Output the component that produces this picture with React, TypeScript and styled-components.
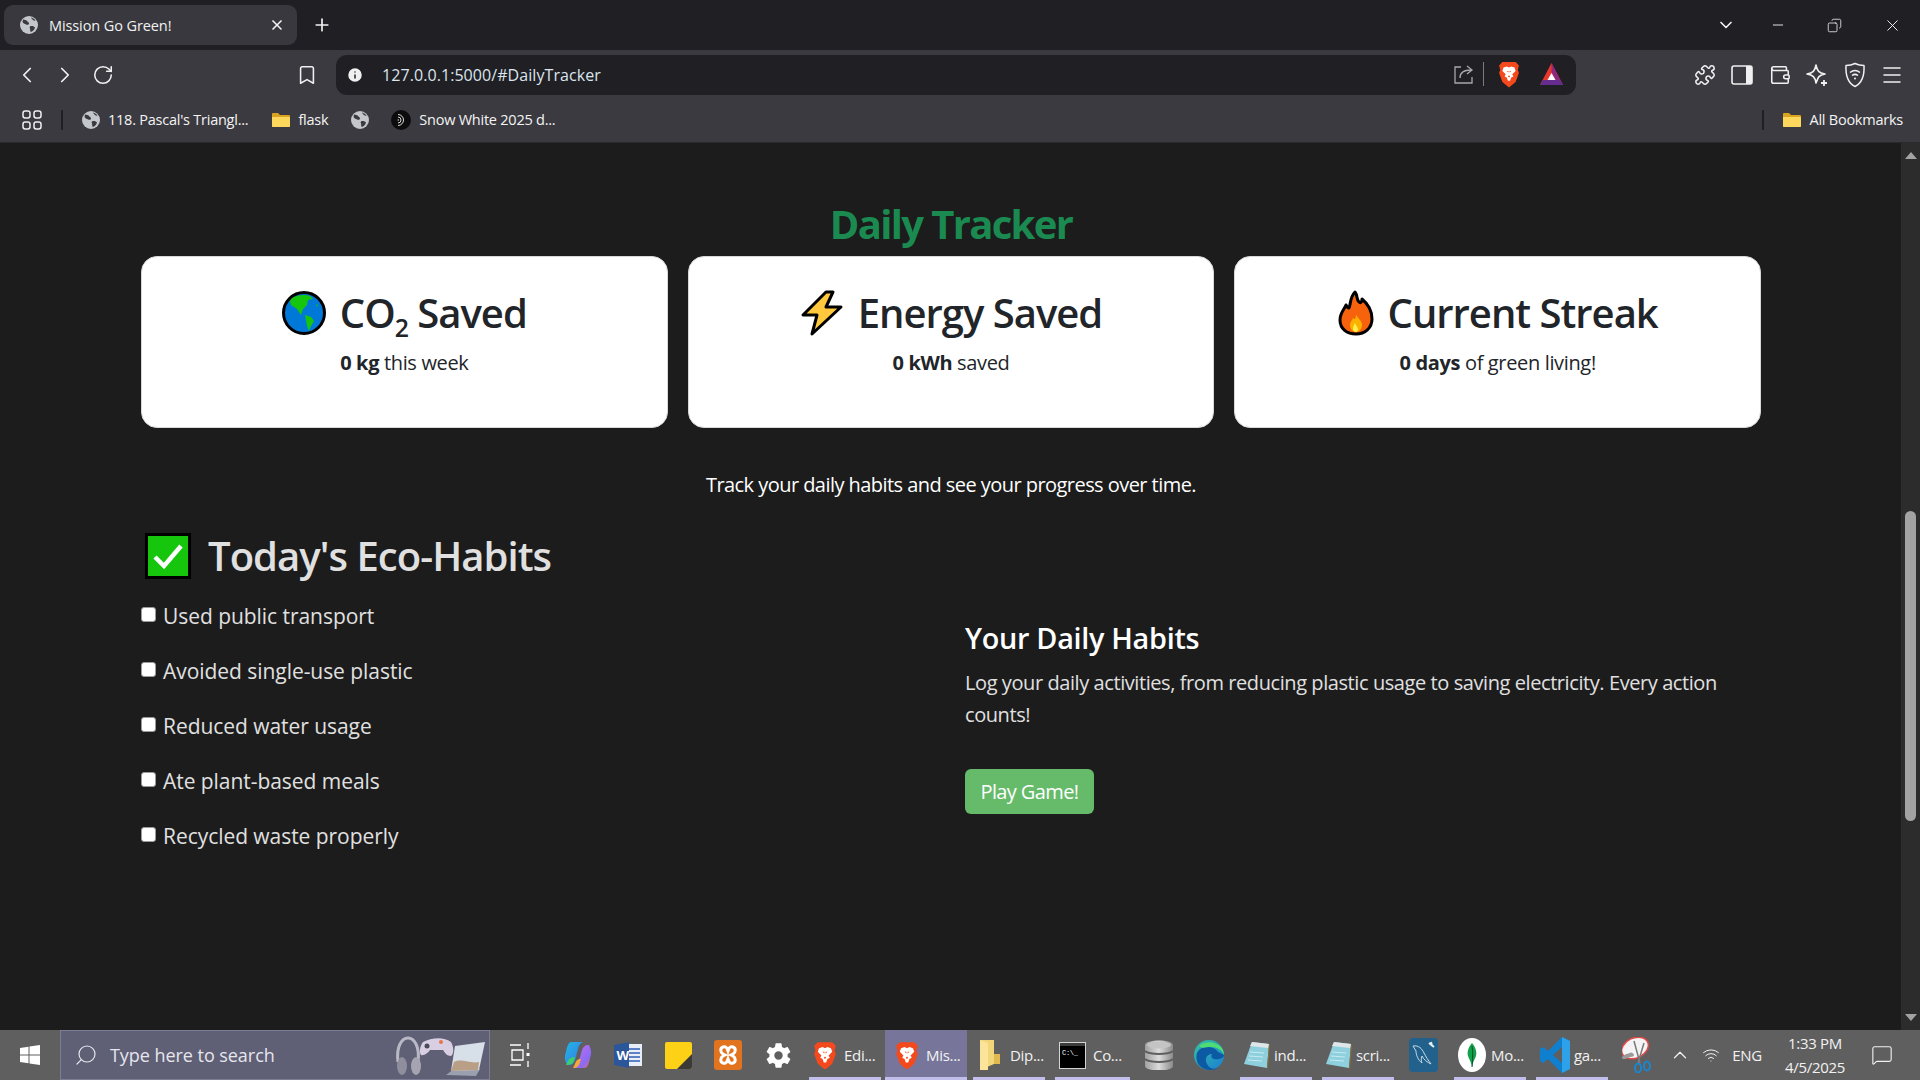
import styled, { createGlobalStyle } from 'styled-components';
import {
  Bookmark,
  ChevronDown,
  ChevronLeft,
  ChevronRight,
  ChevronUp,
  Copy,
  Menu,
  MessageSquare,
  Minus,
  Plus,
  Puzzle,
  RotateCw,
  Search,
  Wallet,
  Wifi,
  X,
  Info,
} from 'lucide-react';
import { IoSettingsSharp } from 'react-icons/io5';

const FONT = '"Open Sans", "Noto Sans", "Liberation Sans", sans-serif';

const GlobalStyle = createGlobalStyle`
  html, body {
    margin: 0;
    padding: 0;
    height: 100%;
    overflow: hidden;
    background: #1c1c1c;
    font-family: ${FONT};
  }
  * { box-sizing: border-box; }
`;

const Screen = styled.div`
  display: flex;
  flex-direction: column;
  width: 1920px;
  height: 1080px;
  overflow: hidden;
`;

/* browser chrome */

const TabStrip = styled.div`
  display: flex;
  align-items: center;
  height: 50px;
  padding: 0 0 0 4px;
  background: #1f1f24;
  color: #f2f2f2;
`;

const Tab = styled.div`
  display: flex;
  align-items: center;
  width: 293px;
  height: 40px;
  padding: 0 12px 0 16px;
  border-radius: 9px;
  background: #38383e;
  font-size: 14.5px;
  letter-spacing: -0.1px;
`;

const TabTitle = styled.span`
  flex: 1;
  margin-left: 11px;
`;

const NewTab = styled.div`
  display: flex;
  margin-left: 15px;
`;

const WindowControls = styled.div`
  display: flex;
  align-items: center;
  margin-left: auto;
`;

const WindowButton = styled.div<{ $width: number }>`
  display: flex;
  justify-content: center;
  width: ${(p) => p.$width}px;
`;

const Toolbar = styled.div`
  display: flex;
  align-items: center;
  height: 52px;
  padding: 2px 0 5px 8px;
  background: #3b3a40;
  color: #f0f0f0;
`;

const ToolButton = styled.div<{ $gap?: number; $width?: number }>`
  display: flex;
  justify-content: center;
  width: ${(p) => p.$width ?? 38}px;
  margin-left: ${(p) => p.$gap ?? 0}px;
`;

const UrlBar = styled.div`
  display: flex;
  align-items: center;
  width: 1240px;
  height: 40px;
  margin-left: 10px;
  padding: 0 3px 0 10px;
  border-radius: 11px;
  background: #1f1f24;
`;

const UrlText = styled.span`
  margin-left: 18px;
  font-size: 16px;
  letter-spacing: 0.07px;
  color: #dce4ec;
`;

const UrlActions = styled.div`
  display: flex;
  align-items: center;
  margin-left: auto;
`;

const UrlDivider = styled.div`
  width: 1px;
  height: 24px;
  margin: 0 14px 0 9px;
  background: #7c7c80;
`;

const BatSlot = styled.div`
  display: flex;
  justify-content: center;
  width: 44px;
  margin-left: 9px;
`;

const BookmarksBar = styled.div`
  display: flex;
  align-items: center;
  height: 41px;
  padding: 0 17px 5px 22px;
  border-bottom: 1px solid #2a2a2e;
  background: #3b3a40;
  color: #f4f4f4;
  font-size: 14.5px;
  letter-spacing: -0.24px;
`;

const BarDivider = styled.div<{ $left?: string }>`
  width: 2px;
  height: 20px;
  margin: 0 19px 0 ${(p) => p.$left ?? '19px'};
  background: #1f1f24;
`;

const BookmarkItem = styled.div<{ $left?: number }>`
  display: flex;
  align-items: center;
  gap: 8px;
  margin-left: ${(p) => p.$left ?? 0}px;
  white-space: nowrap;
`;

/* page */

const Viewport = styled.div`
  display: flex;
  flex: 1;
  min-height: 0;
`;

const Page = styled.main`
  flex: 1;
  padding: 57px 140px 0 141px;
  background: #1c1c1c;
`;

const Title = styled.h1`
  margin: 0 0 8px;
  height: 48px;
  font-size: 40px;
  line-height: 48px;
  font-weight: 700;
  letter-spacing: -1.65px;
  text-align: center;
  color: #1b8a50;
`;

const Cards = styled.section`
  display: grid;
  grid-template-columns: repeat(3, 1fr);
  gap: 20px;
`;

const Card = styled.article`
  height: 172px;
  padding: 32px 16px 0;
  border-radius: 16px;
  background: #fff;
  border: 1px solid #d8d8d8;
  color: #212529;
  text-align: center;
`;

const CardHeading = styled.h2`
  display: flex;
  align-items: center;
  justify-content: center;
  gap: 14px;
  margin: 0 0 10px;
  height: 48px;
  font-size: 40px;
  font-weight: 600;
  letter-spacing: -1px;
  line-height: 48px;
`;

const Subscript = styled.sub`
  font-size: 0.62em;
  line-height: 0;
`;

const CardText = styled.p`
  margin: 0;
  font-size: 20px;
  line-height: 32px;
  letter-spacing: -0.35px;
  font-weight: 400;
  color: #212529;

  strong {
    font-weight: 700;
  }
`;

const Lead = styled.p`
  margin: 41px 0 0;
  font-size: 20px;
  line-height: 32px;
  letter-spacing: -0.55px;
  text-align: center;
  color: #fff;
`;

const Columns = styled.section`
  display: grid;
  grid-template-columns: 796px 796px;
  column-gap: 28px;
  margin-top: 31px;
`;

const HabitsHeading = styled.h2`
  display: flex;
  align-items: center;
  gap: 17px;
  margin: 0 0 8px 4px;
  height: 48px;
  font-size: 40px;
  line-height: 48px;
  font-weight: 600;
  letter-spacing: -0.95px;
  color: #e0e0e0;
`;

const HabitList = styled.ul`
  margin: 0;
  padding: 0;
  list-style: none;
`;

const HabitRow = styled.li`
  display: flex;
  align-items: center;
  height: 55px;
  font-size: 21px;
  letter-spacing: -0.05px;
  color: #e0e0e0;
`;

const HabitBox = styled.input`
  width: 15px;
  height: 15px;
  margin: 0 7px 3px 0;
  appearance: none;
  border-radius: 3px;
  border: 1px solid #9a9a9a;
  background: #fff;
`;

const InfoColumn = styled.div`
  padding-top: 87px;
`;

const InfoHeading = styled.h3`
  margin: 0 0 10px;
  font-size: 28.8px;
  line-height: 38px;
  font-weight: 600;
  letter-spacing: -0.3px;
  color: #fff;
`;

const InfoText = styled.p`
  margin: 0 0 38px;
  font-size: 20px;
  line-height: 32px;
  letter-spacing: -0.42px;
  color: #e0e0e0;
`;

const PlayButton = styled.button`
  width: 129px;
  height: 45px;
  padding: 0;
  border: none;
  border-radius: 6px;
  background: #66bb6a;
  color: #fff;
  font-family: ${FONT};
  font-size: 20px;
  letter-spacing: -0.6px;
`;

const ScrollTrack = styled.div`
  display: flex;
  flex-direction: column;
  align-items: center;
  width: 19px;
  background: #2c2c2c;
`;

const ScrollArrow = styled.div<{ $down?: boolean }>`
  width: 0;
  height: 0;
  margin-top: ${(p) => (p.$down ? 'auto' : '9px')};
  margin-bottom: ${(p) => (p.$down ? '9px' : '0')};
  border-left: 6.5px solid transparent;
  border-right: 6.5px solid transparent;
  ${(p) => (p.$down ? 'border-top: 7px solid #a3a3a3;' : 'border-bottom: 7px solid #a3a3a3;')}
`;

const ScrollThumb = styled.div`
  width: 11px;
  height: 310px;
  margin-top: 352px;
  border-radius: 6px;
  background: #a3a3a3;
`;

/* taskbar */

const Taskbar = styled.footer`
  display: flex;
  align-items: stretch;
  height: 50px;
  background: #5f5f5f;
  color: #f2f2f2;
  font-size: 15px;
  letter-spacing: -0.3px;
`;

const StartButton = styled.div`
  display: flex;
  align-items: center;
  justify-content: center;
  width: 60px;
`;

const SearchBox = styled.div`
  display: flex;
  align-items: center;
  width: 430px;
  padding: 0 3px 0 13px;
  border: 1px solid #7d7d95;
  background: #5f5f75;
  color: #e6e6ee;
  font-size: 18px;
  letter-spacing: -0.05px;
`;

const SearchLabel = styled.span`
  margin-left: 12px;
`;

const SearchArt = styled.svg`
  margin-left: auto;
`;

const IconSlot = styled.div<{ $width?: number }>`
  display: flex;
  align-items: center;
  justify-content: center;
  width: ${(p) => p.$width ?? 50}px;
`;

const TaskViewSlot = styled(IconSlot)`
  padding-right: 4px;
`;

const TaskButton = styled.div<{ $active?: boolean; $gap?: number; $pad?: number; $width?: number }>`
  position: relative;
  display: flex;
  align-items: center;
  gap: ${(p) => p.$gap ?? 7}px;
  width: ${(p) => p.$width ?? 82}px;
  padding-left: ${(p) => p.$pad ?? 10}px;
  background: ${(p) => (p.$active ? '#77769a' : 'transparent')};

  &::after {
    content: '';
    position: absolute;
    left: ${(p) => (p.$active ? 0 : 6)}px;
    right: ${(p) => (p.$active ? 0 : 4)}px;
    bottom: 0;
    height: 3px;
    background: #c2beec;
  }
`;

const Tray = styled.div`
  display: flex;
  align-items: center;
  margin-left: auto;
  padding-right: 16px;
`;

const TrayLabel = styled.span<{ $width: number }>`
  width: ${(p) => p.$width}px;
  text-align: center;
  font-size: 15px;
`;

const Clock = styled.div`
  width: 90px;
  text-align: center;
  font-size: 15px;
  line-height: 24px;
`;

/* small drawings */

const Favicon = () => (
  <svg width="18" height="18" viewBox="0 0 18 18">
    <circle cx="9" cy="9" r="9" fill="#c3c6ca" />
    <path d="M3 3.500c2 .5 3 .3 4 1.500s2 1 2 2.500-2 1.500-3 1-2.500-1-3.500-2.500zM10 10.500c2-1 4 0 5 1-.5 2-2 4-4 4.500-1.500-1-.5-2.500-1-3.500s-.5-1.500 0-2zM11 1.500c2 .5 3.500 1.500 4.500 3-1 .5-2.500 0-3-1s-1.500-1-1.500-2z" fill="#3b3a40" />
  </svg>
);

const FolderIcon = () => (
  <svg width="18" height="18" viewBox="0 0 18 18">
    <path d="M0 3a1 1 0 0 1 1-1h5l2 2h9a1 1 0 0 1 1 1v10a1 1 0 0 1-1 1H1a1 1 0 0 1-1-1z" fill="#d9a520" />
    <path d="M0 6h17a1 1 0 0 1 1 1v8a1 1 0 0 1-1 1H1a1 1 0 0 1-1-1z" fill="#fdd85d" />
  </svg>
);

const BraveIcon = ({ size = 22 }: { size?: number }) => (
  <svg width={size} height={size * 1.2} viewBox="0 0 20 24">
    <path d="M4 1h12l3 3-1 4 1 3-3 8-6 5-6-5-3-8 1-3-1-4z" fill="#f4491c" />
    <path d="M5 6l3-1 2 1 2-1 3 1 1 3-3 3 1 2-2 1-1 3h-2l-1-3-2-1 1-2-3-3z" fill="#fff" />
    <path d="M8 9h1.500v1.500zM12 9h-1.500v1.500zM9 14l1-1 1 1-1 1z" fill="#f4491c" />
  </svg>
);

const BatIcon = () => (
  <svg width="23" height="22" viewBox="0 0 23 22">
    <path d="M11.500 0L23 22H0z" fill="#e8372c" />
    <path d="M11.500 0L23 22h-5L11.500 9z" fill="#8b2a7e" />
    <path d="M0 22l3-5h17l3 5z" fill="#662d91" />
    <path d="M11.500 10l4 7h-8z" fill="#fff" />
  </svg>
);

const ShareIcon = () => (
  <svg width="20" height="20" viewBox="0 0 20 20" fill="none" stroke="#a8a8ac" strokeWidth="1.300">
    <path d="M7 3H1v16h17v-6" />
    <path d="M6 14c0-5 4-8 11-8M13 2l5 4-5 4" />
  </svg>
);

const SidebarIcon = () => (
  <svg width="22" height="22" viewBox="0 0 22 22">
    <rect x="1" y="2" width="20" height="18" rx="2" fill="none" stroke="#f0f0f0" strokeWidth="1.600" />
    <path d="M15 2h4a2 2 0 0 1 2 2v14a2 2 0 0 1-2 2h-4z" fill="#f0f0f0" />
  </svg>
);

const LeoIcon = () => (
  <svg width="22" height="24" viewBox="0 0 22 24" fill="none" stroke="#f0f0f0" strokeWidth="1.600">
    <path d="M10 2c1 6 3 8 9 9-6 1-7 3-9 9-1-6-3-8-9-9 6-1 8-3 9-9z" strokeLinejoin="round" />
    <path d="M18 17v6M15 20h6" strokeWidth="1.800" />
  </svg>
);

const VpnShieldIcon = () => (
  <svg width="22" height="26" viewBox="0 0 22 26" fill="none" stroke="#f0f0f0" strokeWidth="1.500">
    <path d="M11 1.500c3 1.500 6 2 9 2 .5 9-1 17-9 21-8-4-9.500-12-9-21 3 0 6-.5 9-2z" strokeLinejoin="round" />
    <path d="M6 10.500c3-2.500 7-2.500 10 0M8 13.500c2-1.500 4-1.500 6 0" />
    <circle cx="11" cy="16.500" r="1" fill="#f0f0f0" stroke="none" />
  </svg>
);

const EarthEmoji = () => (
  <svg width="44" height="44" viewBox="0 0 44 44">
    <circle cx="22" cy="22" r="20.500" fill="#0078d7" stroke="#000" strokeWidth="3" />
    <path d="M10 7c5-3 13-4 18-2l3 3-5 1-1 5-4 4-2 6-4-6-6-4-1-4z" fill="#16c60c" />
    <path d="M23 24l6 2 3 4-3 5-2 5-2-5-1-6zM34 13l2 1-1 2z" fill="#16c60c" />
  </svg>
);

const BoltEmoji = () => (
  <svg width="44" height="46" viewBox="0 0 44 46">
    <path d="M26 2L3 25h14l-5 19 29-27H26l7-15z" fill="#ffc83d" stroke="#000" strokeWidth="3" strokeLinejoin="round" />
  </svg>
);

const FireEmoji = () => (
  <svg width="36" height="46" viewBox="0 0 36 46">
    <path d="M17 2c3 4 1 7 4 10 2 2 3-1 3-3 6 5 10 12 10 20 0 9-7 15-16 15S2 39 2 30c0-7 4-10 6-15 1 2 2 3 3 3 2-5 1-11 6-16z" fill="#f7630c" stroke="#000" strokeWidth="3" strokeLinejoin="round" />
    <path d="M18 24c1 4 6 6 6 11 0 4-3 7-6 7s-6-3-6-7c0-3 2-4 3-7 1 1 2 1 2 1 1-2 1-3 1-5z" fill="#fcb100" />
    <path d="M17 33c1 3 3 4 3 6 0 2-1 3-2 3s-3-1-3-3c0-3 1-4 2-6z" fill="#fff04d" />
  </svg>
);

const CheckEmoji = () => (
  <svg width="46" height="46" viewBox="0 0 46 46">
    <rect x="1.500" y="1.500" width="43" height="43" fill="#16c60c" stroke="#000" strokeWidth="3" />
    <path d="M10 24l9 9 17-20" fill="none" stroke="#fff" strokeWidth="4.500" />
  </svg>
);

const WindowsLogo = () => (
  <svg width="20" height="20" viewBox="0 0 20 20" fill="#fff">
    <path d="M0 3l8.500-1.200V9.500H0zM9.500 1.600L20 0v9.500H9.500zM0 10.500h8.500v7.700L0 17zM9.500 10.500H20V20L9.500 18.400z" />
  </svg>
);

const TaskViewIcon = () => (
  <svg width="20" height="24" viewBox="0 0 20 24" fill="none" stroke="#fff" strokeWidth="1.300">
    <path d="M0 2h11M0 22h11M2 7h11v10H2zM18 0v6M18 18v6" />
    <rect x="16.500" y="10" width="3" height="3" fill="#fff" stroke="none" />
  </svg>
);

const SearchDecor = () => (
  <SearchArt width="92" height="46" viewBox="0 0 92 46">
    <path d="M4 30C2 14 8 6 14 6s12 8 10 24" fill="none" stroke="#b9b8c6" strokeWidth="3" />
    <ellipse cx="8" cy="34" rx="5" ry="9" fill="#8f8e9c" />
    <ellipse cx="22" cy="34" rx="5" ry="9" fill="#a5a4b0" />
    <path d="M29 10c8-4 20-6 28 0 3 5 3 12 0 14-4 0-6-3-8-6H36c-2 3-6 6-9 5-2-3-1-9 2-13z" fill="#d9cfe2" />
    <circle cx="33" cy="14" r="2.500" fill="#4a4a58" />
    <circle cx="47" cy="10" r="2" fill="#e8724a" />
    <path d="M52 43l8-6h26l-4 7z" fill="#9aa0ae" />
    <path d="M61 14l30-4-6 28-28 1z" fill="#d7dfe8" />
    <path d="M60 30c8-4 16 2 25 0l-1 8-27 1z" fill="#b89f86" />
  </SearchArt>
);

const CopilotIcon = () => (
  <svg width="28" height="28" viewBox="0 0 28 28">
    <defs>
      <linearGradient id="cop1" x1="0" y1="0" x2="1" y2="1">
        <stop offset="0" stopColor="#1fb8e6" />
        <stop offset="0.6" stopColor="#2f8fe6" />
        <stop offset="1" stopColor="#3ccf6a" />
      </linearGradient>
      <linearGradient id="cop2" x1="0" y1="0" x2="1" y2="1">
        <stop offset="0" stopColor="#d06bf0" />
        <stop offset="0.7" stopColor="#8a6bf5" />
        <stop offset="1" stopColor="#f26a5a" />
      </linearGradient>
    </defs>
    <path d="M8 1h11c-3 1-4 3-5 7l-3 11c-1 3-3 5-6 5H3C1 20 0 16 2 11 3 6 4 1 8 1z" fill="url(#cop1)" />
    <path d="M20 27H9c3-1 5-3 6-7l3-11c1-3 3-5 6-5h1c2 4 3 8 1 13-1 5-2 10-6 10z" fill="url(#cop2)" />
    <path d="M9 27c4 0 6-2 7-6l1-3c-4 0-5 2-6 5z" fill="#f7a63a" />
    <path d="M2 24c4 0 7-1 8-5l1-3c-3 0-6 1-7 4z" fill="#3ccf6a" />
  </svg>
);

const WordIcon = () => (
  <svg width="28" height="28" viewBox="0 0 28 28">
    <rect x="10" y="3" width="18" height="22" fill="#e8eef8" />
    <path d="M14 8h12M14 12h12M14 16h12M14 20h12" stroke="#2b5fb3" strokeWidth="1.500" />
    <path d="M0 4l15-3v26L0 24z" fill="#2b579a" />
    <text x="2.500" y="19" fontSize="13" fontWeight="700" fill="#fff" fontFamily="Open Sans">W</text>
  </svg>
);

const StickyIcon = () => (
  <svg width="27" height="27" viewBox="0 0 27 27">
    <rect width="27" height="27" rx="2" fill="#fcd116" />
    <path d="M27 12v13a2 2 0 0 1-2 2H12z" fill="#3b3a36" />
  </svg>
);

const XamppIcon = () => (
  <svg width="28" height="30" viewBox="0 0 28 30">
    <rect width="28" height="30" rx="3" fill="#e2741f" />
    <path d="M9 7c3-1 4 1 5 4 1-3 2-5 5-4s3 5 0 7l-2 1 2 1c3 2 3 6 0 7s-4-1-5-4c-1 3-2 5-5 4s-3-5 0-7l2-1-2-1c-3-2-3-6 0-7z" fill="none" stroke="#fff" strokeWidth="3" />
  </svg>
);

const DatabaseIcon = () => (
  <svg width="28" height="30" viewBox="0 0 28 30">
    <defs>
      <linearGradient id="dbg" x1="0" y1="0" x2="1" y2="0">
        <stop offset="0" stopColor="#a0a0a0" />
        <stop offset="0.5" stopColor="#dcdcdc" />
        <stop offset="1" stopColor="#8a8a8a" />
      </linearGradient>
    </defs>
    <path d="M0 5c0-6 28-6 28 0v21c0 6-28 6-28 0z" fill="url(#dbg)" />
    <path d="M0 11c5 4 23 4 28 0M0 19c5 4 23 4 28 0" fill="none" stroke="#5f5f5f" strokeWidth="2" />
    <ellipse cx="14" cy="5" rx="12" ry="3.500" fill="#c4c4c4" />
  </svg>
);

const EdgeIcon = () => (
  <svg width="30" height="30" viewBox="0 0 30 30">
    <defs>
      <linearGradient id="edg" x1="0" y1="0" x2="1" y2="1">
        <stop offset="0" stopColor="#35c1a0" />
        <stop offset="1" stopColor="#1a7ed6" />
      </linearGradient>
    </defs>
    <circle cx="15" cy="15" r="15" fill="url(#edg)" />
    <path d="M30 15c0 3-5 5-10 4-3-1-3-3-2-5-5 0-8 5-5 10 2 4 6 6 12 4-6 3-15 3-20-3-3-4-3-9-2-12 3-6 8-6 12-6s8 3 9 5" fill="#0c59a4" />
    <path d="M5 6c6-5 16-5 22 1 2 2 3 5 3 8-2-5-7-8-13-8-5 0-9 2-12-1z" fill="#4fdc74" />
  </svg>
);

const NotepadIcon = () => (
  <svg width="26" height="30" viewBox="0 0 26 30">
    <path d="M8 2l17 2-2 24L0 24z" fill="#8fd0de" />
    <path d="M8 2l17 2-1 4L6 6z" fill="#e0e6e8" />
    <path d="M23 28l2-24 1 1-2 24z" fill="#8a6b3a" />
    <path d="M6 12l14 1M5 16l14 1M4 20l14 1" stroke="#c8eaf2" strokeWidth="1" />
  </svg>
);

const ExplorerIcon = () => (
  <svg width="20" height="30" viewBox="0 0 20 30">
    <path d="M0 0h14v24l-14 6z" fill="#f3d57a" />
    <path d="M14 14h6v10h-6z" fill="#e2b94e" />
    <path d="M0 0l8 3v27H0z" fill="#fbe49a" />
  </svg>
);

const ConsoleIcon = () => (
  <svg width="27" height="27" viewBox="0 0 27 27">
    <rect width="27" height="27" fill="#d4d4d4" />
    <rect x="1" y="1" width="25" height="3" fill="#3c3c3c" />
    <rect x="1" y="4" width="25" height="22" fill="#000" />
    <text x="3" y="13" fontSize="7" fill="#fff" fontFamily="Liberation Mono">C:\_</text>
  </svg>
);

const MysqlIcon = () => (
  <svg width="29" height="34" viewBox="0 0 29 34">
    <rect width="29" height="34" rx="4" fill="#21618c" />
    <path d="M4 8c6-1 9 3 11 7s4 7 7 11c-4-2-7-4-9-8-1 3-1 5 0 7-4-3-6-8-6-12z" fill="none" stroke="#c7dbe8" strokeWidth="1" />
    <path d="M20 5l5 4M22 4l1 4" stroke="#e6eef4" strokeWidth="2" />
  </svg>
);

const MongoIcon = () => (
  <svg width="28" height="34" viewBox="0 0 28 34">
    <ellipse cx="14" cy="17" rx="14" ry="17" fill="#fff" />
    <path d="M14 5c4 5 5 9 4 13-1 3-3 5-4 11-1-6-3-8-4-11-1-4 0-8 4-13z" fill="#13a04c" />
    <path d="M14 8c1 6 1 14 0 21" stroke="#0a5f30" strokeWidth="1" />
  </svg>
);

const VsCodeIcon = () => (
  <svg width="30" height="36" viewBox="0 0 30 36">
    <path d="M22 0l8 4v28l-8 4-14-14-5 4-3-2V12l3-2 5 4z" fill="#0f7fd0" />
    <path d="M22 0l8 4v28l-8 4z" fill="#2da1ea" />
    <path d="M22 10l-9 8 9 8z" fill="#5f5f5f" />
  </svg>
);

const SnipIcon = () => (
  <svg width="30" height="36" viewBox="0 0 30 36">
    <ellipse cx="13" cy="11" rx="14" ry="10" transform="rotate(-25 13 11)" fill="#f4f4f4" stroke="#e04848" strokeWidth="1.500" />
    <path d="M8 20c8 0 2-6 0-4-5 1-8 3-8 5s4 1 8-1z" fill="#9a9a9a" />
    <path d="M12 4l6 22M22 6l-6 20" stroke="#7a7a7a" strokeWidth="1.500" />
    <ellipse cx="16" cy="31" rx="3" ry="4.500" fill="none" stroke="#1a86d0" strokeWidth="2" />
    <ellipse cx="25" cy="29" rx="3" ry="4.500" fill="none" stroke="#1a86d0" strokeWidth="2" />
  </svg>
);

const SnowIcon = () => (
  <svg width="20" height="20" viewBox="0 0 20 20" fill="none">
    <circle cx="10" cy="10" r="10" fill="#0c0c0c" />
    <path d="M7 4.500a5.500 5.500 0 0 1 0 11M7 7a3 3 0 0 1 0 6M7 9.200a1 1 0 0 1 0 1.600" stroke="#d8d8d8" strokeWidth="1" />
  </svg>
);

const GridIcon = () => (
  <svg width="20" height="20" viewBox="0 0 20 20" fill="none" stroke="#f0f0f0" strokeWidth="1.500">
    <rect x="1" y="1" width="7" height="7" rx="2.200" />
    <rect x="12" y="1" width="7" height="7" rx="2.200" />
    <rect x="1" y="12" width="7" height="7" rx="2.200" />
    <rect x="12" y="12" width="7" height="7" rx="2.200" />
  </svg>
);

const stats = [
  { icon: <EarthEmoji />, title: <>CO<Subscript>2</Subscript> Saved</>, value: '0 kg', rest: ' this week' },
  { icon: <BoltEmoji />, title: <>Energy Saved</>, value: '0 kWh', rest: ' saved' },
  { icon: <FireEmoji />, title: <>Current Streak</>, value: '0 days', rest: ' of green living!' },
];

const habits = [
  'Used public transport',
  'Avoided single-use plastic',
  'Reduced water usage',
  'Ate plant-based meals',
  'Recycled waste properly',
];

function App() {
  return (
    <Screen>
      <GlobalStyle />

      <TabStrip>
        <Tab>
          <Favicon />
          <TabTitle>Mission Go Green!</TabTitle>
          <X size={16} strokeWidth={2.5} />
        </Tab>
        <NewTab>
          <Plus size={20} />
        </NewTab>
        <WindowControls>
          <WindowButton $width={52}><ChevronDown size={20} /></WindowButton>
          <WindowButton $width={52}><Minus size={16} strokeWidth={1.4} /></WindowButton>
          <WindowButton $width={60}><Copy size={15} strokeWidth={1.3} style={{ transform: 'scaleX(-1)' }} /></WindowButton>
          <WindowButton $width={56}><X size={19} strokeWidth={1.2} /></WindowButton>
        </WindowControls>
      </TabStrip>

      <Toolbar>
        <ToolButton><ChevronLeft size={26} strokeWidth={1.6} /></ToolButton>
        <ToolButton><ChevronRight size={26} strokeWidth={1.6} /></ToolButton>
        <ToolButton><RotateCw size={22} strokeWidth={1.7} /></ToolButton>
        <ToolButton $gap={166}><Bookmark size={22} strokeWidth={1.7} /></ToolButton>
        <UrlBar>
          <Info size={18} fill="#f0f0f0" stroke="#1f1f24" />
          <UrlText>127.0.0.1:5000/#DailyTracker</UrlText>
          <UrlActions>
            <ShareIcon />
            <UrlDivider />
            <BraveIcon />
            <BatSlot><BatIcon /></BatSlot>
          </UrlActions>
        </UrlBar>
        <ToolButton $gap={110} $width={37.5}><Puzzle size={22} strokeWidth={1.7} /></ToolButton>
        <ToolButton $width={37.5}><SidebarIcon /></ToolButton>
        <ToolButton $width={37.5}><Wallet size={22} strokeWidth={1.7} /></ToolButton>
        <ToolButton $width={37.5}><LeoIcon /></ToolButton>
        <ToolButton $width={37.5}><VpnShieldIcon /></ToolButton>
        <ToolButton $width={37.5}><Menu size={24} strokeWidth={1.5} /></ToolButton>
      </Toolbar>

      <BookmarksBar>
        <GridIcon />
        <BarDivider />
        <BookmarkItem>
          <Favicon />
          118. Pascal's Triangl...
        </BookmarkItem>
        <BookmarkItem $left={24}>
          <FolderIcon />
          flask
        </BookmarkItem>
        <BookmarkItem $left={23}>
          <Favicon />
        </BookmarkItem>
        <BookmarkItem $left={22}>
          <SnowIcon />
          Snow White 2025 d...
        </BookmarkItem>
        <BarDivider $left="auto" />
        <BookmarkItem>
          <FolderIcon />
          All Bookmarks
        </BookmarkItem>
      </BookmarksBar>

      <Viewport>
        <Page>
          <Title>Daily Tracker</Title>
          <Cards>
            {stats.map((stat) => (
              <Card key={stat.value}>
                <CardHeading>
                  {stat.icon}
                  <span>{stat.title}</span>
                </CardHeading>
                <CardText>
                  <strong>{stat.value}</strong>
                  {stat.rest}
                </CardText>
              </Card>
            ))}
          </Cards>

          <Lead>Track your daily habits and see your progress over time.</Lead>

          <Columns>
            <div>
              <HabitsHeading>
                <CheckEmoji />
                Today's Eco-Habits
              </HabitsHeading>
              <HabitList>
                {habits.map((habit) => (
                  <HabitRow key={habit}>
                    <HabitBox type="checkbox" readOnly />
                    {habit}
                  </HabitRow>
                ))}
              </HabitList>
            </div>
            <InfoColumn>
              <InfoHeading>Your Daily Habits</InfoHeading>
              <InfoText>
                Log your daily activities, from reducing plastic usage to saving electricity. Every action counts!
              </InfoText>
              <PlayButton>Play Game!</PlayButton>
            </InfoColumn>
          </Columns>
        </Page>
        <ScrollTrack>
          <ScrollArrow />
          <ScrollThumb />
          <ScrollArrow $down />
        </ScrollTrack>
      </Viewport>

      <Taskbar>
        <StartButton><WindowsLogo /></StartButton>
        <SearchBox>
          <Search size={24} strokeWidth={1.2} style={{ transform: 'scaleX(-1)' }} />
          <SearchLabel>Type here to search</SearchLabel>
          <SearchDecor />
        </SearchBox>
        <TaskViewSlot $width={63}><TaskViewIcon /></TaskViewSlot>
        <IconSlot><CopilotIcon /></IconSlot>
        <IconSlot><WordIcon /></IconSlot>
        <IconSlot><StickyIcon /></IconSlot>
        <IconSlot><XamppIcon /></IconSlot>
        <IconSlot><IoSettingsSharp size={27} color="#fff" /></IconSlot>
        <TaskButton><BraveIcon size={24} />Edi...</TaskButton>
        <TaskButton $active><BraveIcon size={24} />Mis...</TaskButton>
        <TaskButton $pad={13} $gap={10}><ExplorerIcon />Dip...</TaskButton>
        <TaskButton $width={85}><ConsoleIcon />Co...</TaskButton>
        <IconSlot><DatabaseIcon /></IconSlot>
        <IconSlot><EdgeIcon /></IconSlot>
        <TaskButton $gap={4}><NotepadIcon />ind...</TaskButton>
        <TaskButton $gap={4}><NotepadIcon />scri...</TaskButton>
        <IconSlot><MysqlIcon /></IconSlot>
        <TaskButton $gap={5}><MongoIcon />Mo...</TaskButton>
        <TaskButton $gap={4}><VsCodeIcon />ga...</TaskButton>
        <IconSlot><SnipIcon /></IconSlot>
        <Tray>
          <IconSlot $width={36}><ChevronUp size={22} strokeWidth={1.3} /></IconSlot>
          <IconSlot $width={26}><Wifi size={18} strokeWidth={1.3} /></IconSlot>
          <TrayLabel $width={46}>ENG</TrayLabel>
          <Clock>
            1:33 PM
            <br />
            4/5/2025
          </Clock>
          <IconSlot $width={44}><MessageSquare size={22} strokeWidth={1.2} /></IconSlot>
        </Tray>
      </Taskbar>
    </Screen>
  );
}

export default App;
